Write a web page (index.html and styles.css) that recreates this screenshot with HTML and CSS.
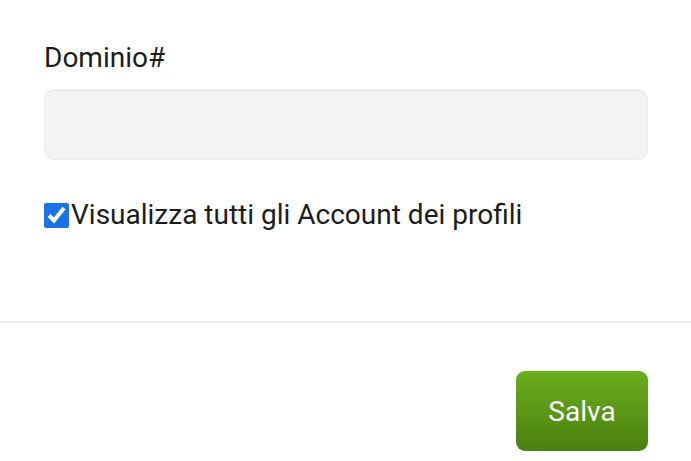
FILE: index.html
```html
<html>
<head>
    <title>Dominio</title>
    <link rel="stylesheet" href="styles.css">
</head>
<body>
    <form class="settings">
        <div class="fields">
            <label for="domain" class="field-label">Dominio#</label>
            <input type="text" id="domain" name="domain" class="field-input" />
            <label class="check-row">
                <input type="checkbox" name="show_all" checked />
                <span>Visualizza tutti gli Account dei profili</span>
            </label>
        </div>
        <div class="footer">
            <button type="submit" class="save-button">Salva</button>
        </div>
    </form>
</body>
</html>
```

FILE: styles.css
```css
body {
    font-family: Roboto, "Liberation Sans", sans-serif;
    margin: 0;
    color: #1c1c1c;
    background: #fff;
}
.fields {
    display: flex;
    flex-direction: column;
    padding: 40px 43px 0 44px;
    height: 321px;
    box-sizing: border-box;
}
.field-label {
    font-size: 28px;
    line-height: 36px;
    margin-bottom: 13px;
}
.field-input {
    height: 71px;
    border: 1px solid #ececec;
    border-radius: 10px;
    background: #f3f3f3;
    box-shadow: inset 0 1px 2px rgba(0, 0, 0, 0.04);
    font-size: 22px;
    padding: 0 16px;
    outline: none;
}
.check-row {
    display: flex;
    align-items: center;
    margin-top: 38px;
    font-size: 28px;
    line-height: 34px;
}
.check-row input {
    width: 25px;
    height: 25px;
    margin: 0 2px 0 0;
    accent-color: #1a73e8;
}
.footer {
    border-top: 2px solid #ebebeb;
    display: flex;
    justify-content: flex-end;
    padding: 48px 43px 0 0;
}
.save-button {
    width: 132px;
    height: 80px;
    border: none;
    border-radius: 9px;
    background: linear-gradient(to bottom, #6aae1e, #4a800f);
    color: #fff;
    font-family: Roboto, "Liberation Sans", sans-serif;
    font-size: 28px;
}
```
